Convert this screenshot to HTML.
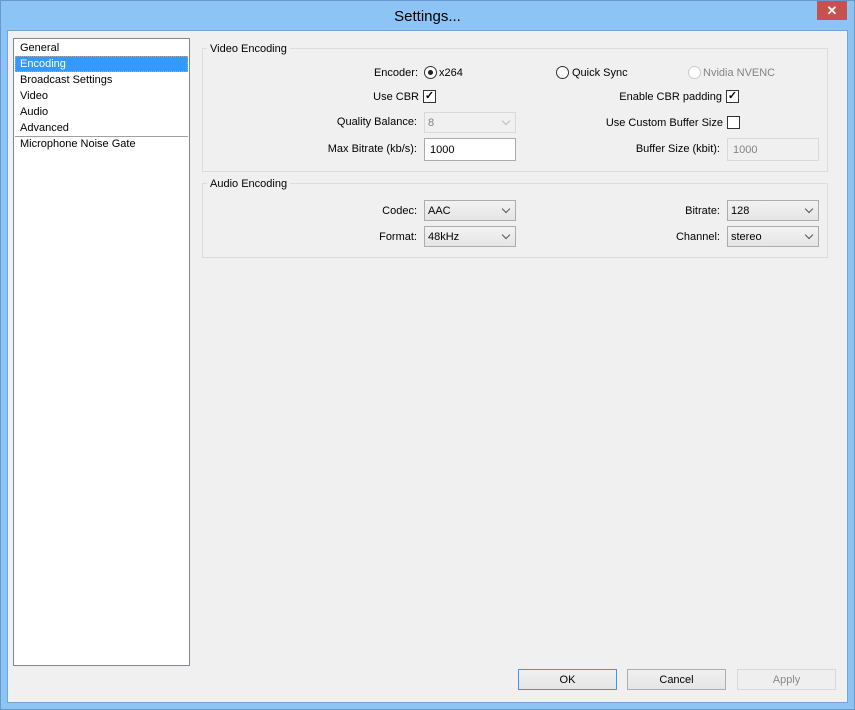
<!DOCTYPE html>
<html><head><meta charset="utf-8"><style>
*{box-sizing:border-box;margin:0;padding:0}
body{width:855px;height:710px;background:#8cc4f5;font-family:"Liberation Sans",sans-serif;font-size:11px;color:#000;position:relative;overflow:hidden}
.a{position:absolute;white-space:nowrap}
#frame{left:0;top:0;width:855px;height:710px;border:1px solid #6a98c8}
#title{left:0;top:8px;width:855px;text-align:center;font-size:15px;color:#000}
#close{left:817px;top:1px;width:30px;height:19px;background:#c75050;color:#fff;font-weight:bold;font-size:13px;text-align:center;line-height:19px}
#client{left:7px;top:30px;width:841px;height:673px;background:#f0f0f0;border:1px solid #72a6da}
#list{left:13px;top:38px;width:177px;height:628px;background:#fff;border:1px solid #828790}
.li{position:absolute;left:6px;font-size:11px}
.grp{position:absolute;border:1px solid #dcdcdc}
.gl{position:absolute;background:#f0f0f0;padding:0 3px}
.lbl{position:absolute;text-align:right;white-space:nowrap}
.cb{position:absolute;width:13px;height:13px;border:1px solid #333;background:#fff;font-size:11px;line-height:11px;text-align:center;font-weight:bold}
.rd{position:absolute;width:13px;height:13px;border:1px solid #333;border-radius:50%;background:#fff}
.combo{position:absolute;width:92px;height:21px;border:1px solid #acacac;background:linear-gradient(#f2f2f2,#e5e5e5);padding:4px 3px;font-size:11px}
.combo:after{content:"";position:absolute;right:6px;top:5px;width:5px;height:5px;border-right:1.5px solid #555;border-bottom:1.5px solid #555;transform:rotate(45deg)}
.dis{background:#f0f0f0;border-color:#d9d9d9;color:#838383}
.dis:after{border-color:#bbb}
.inp{position:absolute;width:92px;height:23px;border:1px solid #acacac;background:#fff;padding:5px 5px;font-size:11px}
.btn{position:absolute;top:669px;width:99px;height:21px;border:1px solid #adadad;background:linear-gradient(#f0f0f0,#e5e5e5);text-align:center;line-height:21px;font-size:11px}
</style></head><body>
<div class="a" id="frame"></div>
<div class="a" id="title">Settings...</div>
<div class="a" id="close">✕</div>
<div class="a" id="client"></div>
<div class="a" id="list">
<div class="li" style="top:3px">General</div>
<div style="position:absolute;left:1px;top:17px;width:173px;height:16px;background:#3399ff;border:1px dotted #e0a060"></div>
<div class="li" style="top:19px;color:#fff">Encoding</div>
<div class="li" style="top:35px">Broadcast Settings</div>
<div class="li" style="top:51px">Video</div>
<div class="li" style="top:67px">Audio</div>
<div class="li" style="top:83px">Advanced</div>
<div style="position:absolute;left:1px;top:97px;width:173px;height:1px;background:#a0a0a0"></div>
<div class="li" style="top:99px">Microphone Noise Gate</div>
</div>

<div class="grp" style="left:202px;top:48px;width:626px;height:124px"></div>
<div class="gl" style="left:207px;top:43px">Video Encoding</div>
<div class="grp" style="left:202px;top:183px;width:626px;height:75px"></div>
<div class="gl" style="left:207px;top:178px">Audio Encoding</div>

<div class="lbl" style="right:437px;top:67px">Encoder:</div>
<div class="rd" style="left:424px;top:66px"><div style="position:absolute;left:3px;top:3px;width:5px;height:5px;border-radius:50%;background:#222"></div></div>
<div class="a" style="left:439px;top:67px">x264</div>
<div class="rd" style="left:556px;top:66px"></div>
<div class="a" style="left:572px;top:67px">Quick Sync</div>
<div class="rd" style="left:688px;top:66px;border-color:#ccc"></div>
<div class="a" style="left:703px;top:67px;color:#838383">Nvidia NVENC</div>

<div class="lbl" style="right:436px;top:91px">Use CBR</div>
<div class="cb" style="left:423px;top:90px">✓</div>
<div class="lbl" style="right:133px;top:91px">Enable CBR padding</div>
<div class="cb" style="left:726px;top:90px">✓</div>

<div class="lbl" style="right:438px;top:116px">Quality Balance:</div>
<div class="combo dis" style="left:424px;top:112px">8</div>
<div class="lbl" style="right:132px;top:117px">Use Custom Buffer Size</div>
<div class="cb" style="left:727px;top:116px"></div>

<div class="lbl" style="right:438px;top:143px">Max Bitrate (kb/s):</div>
<div class="inp" style="left:424px;top:138px">1000</div>
<div class="lbl" style="right:135px;top:143px">Buffer Size (kbit):</div>
<div class="inp" style="left:727px;top:138px;background:#f0f0f0;border-color:#d9d9d9;color:#838383">1000</div>

<div class="lbl" style="right:438px;top:205px">Codec:</div>
<div class="combo" style="left:424px;top:200px">AAC</div>
<div class="lbl" style="right:135px;top:205px">Bitrate:</div>
<div class="combo" style="left:727px;top:200px">128</div>
<div class="lbl" style="right:438px;top:231px">Format:</div>
<div class="combo" style="left:424px;top:226px">48kHz</div>
<div class="lbl" style="right:135px;top:231px">Channel:</div>
<div class="combo" style="left:727px;top:226px">stereo</div>

<div class="btn" style="left:518px;border-color:#3399ff">OK</div>
<div class="btn" style="left:627px">Cancel</div>
<div class="btn" style="left:737px;border-color:#d9d9d9;background:#efefef;color:#8a8a8a">Apply</div>
</body></html>
